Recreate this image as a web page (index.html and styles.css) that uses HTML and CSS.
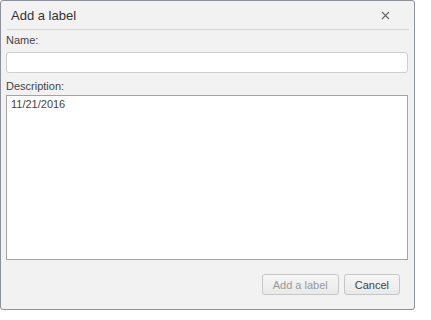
FILE: index.html
```html
<!DOCTYPE html>
<html lang="en">
<head>
    <meta charset="UTF-8">
    <meta name="viewport" content="width=device-width, initial-scale=1.0">
    <title>Add a label</title>
    <link rel="stylesheet" href="styles.css">
</head>
<body>
    <div class="dialog">
        <div class="dialog-header">
            <span class="dialog-title">Add a label</span>
            <svg class="dialog-close" width="9" height="9" viewBox="0 0 9 9">
                <path d="M1 1L8 8M8 1L1 8" stroke="#666" stroke-width="1.1" fill="none"/>
            </svg>
        </div>
        <div class="dialog-body">
            <label class="field-label" for="labelName">Name:</label>
            <input class="field-input" id="labelName" type="text">
            <label class="field-label desc" for="labelDesc">Description:</label>
            <textarea class="field-area" id="labelDesc">11/21/2016</textarea>
        </div>
        <div class="dialog-footer">
            <button class="btn" disabled>Add a label</button>
            <button class="btn">Cancel</button>
        </div>
    </div>
</body>
</html>
```

FILE: styles.css
```css
/* Global Styles */
body {
    margin: 0;
    background: #ffffff;
    font-family: 'Liberation Sans', Arial, sans-serif;
    color: #333;
}

.dialog {
    width: 413px;
    height: 308px;
    background: #f2f2f2;
    border: 1px solid #8c9198;
    border-radius: 3px;
    display: flex;
    flex-direction: column;
}

/* Header */
.dialog-header {
    height: 28px;
    margin: 0 5px 0 6px;
    padding: 0 19px 0 4px;
    border-bottom: 1px solid #d4d4d4;
    display: flex;
    align-items: center;
    justify-content: space-between;
}

.dialog-title {
    font-size: 13px;
    color: #333;
}

.dialog-close {
    display: block;
}

/* Body */
.dialog-body {
    padding: 0 6px 0 5px;
    display: flex;
    flex-direction: column;
}

.field-label {
    font-size: 11px;
    line-height: 13px;
    padding-top: 4px;
    margin-bottom: 5px;
    color: #444;
}

.field-label.desc {
    padding-top: 7px;
    margin-bottom: 2px;
}

.field-input {
    box-sizing: border-box;
    height: 21px;
    margin: 0;
    border: 1px solid #cfcfcf;
    border-radius: 3px;
    background: #fff;
    font-family: inherit;
    font-size: 11px;
}

.field-area {
    box-sizing: border-box;
    height: 165px;
    margin: 0;
    padding: 2px 4px;
    border: 1px solid #a3a3a3;
    background: #fff;
    resize: none;
    font-family: inherit;
    font-size: 11px;
    color: #444;
}

/* Footer */
.dialog-footer {
    display: flex;
    justify-content: flex-end;
    gap: 5px;
    padding: 14px 14px 0 0;
}

.btn {
    height: 21px;
    padding: 0 10px;
    border: 1px solid #c6c6c6;
    border-radius: 3px;
    background: linear-gradient(#f6f6f6, #e9e9e9);
    font-family: inherit;
    font-size: 11px;
    color: #444;
}

.btn:disabled {
    color: #999;
}
```
